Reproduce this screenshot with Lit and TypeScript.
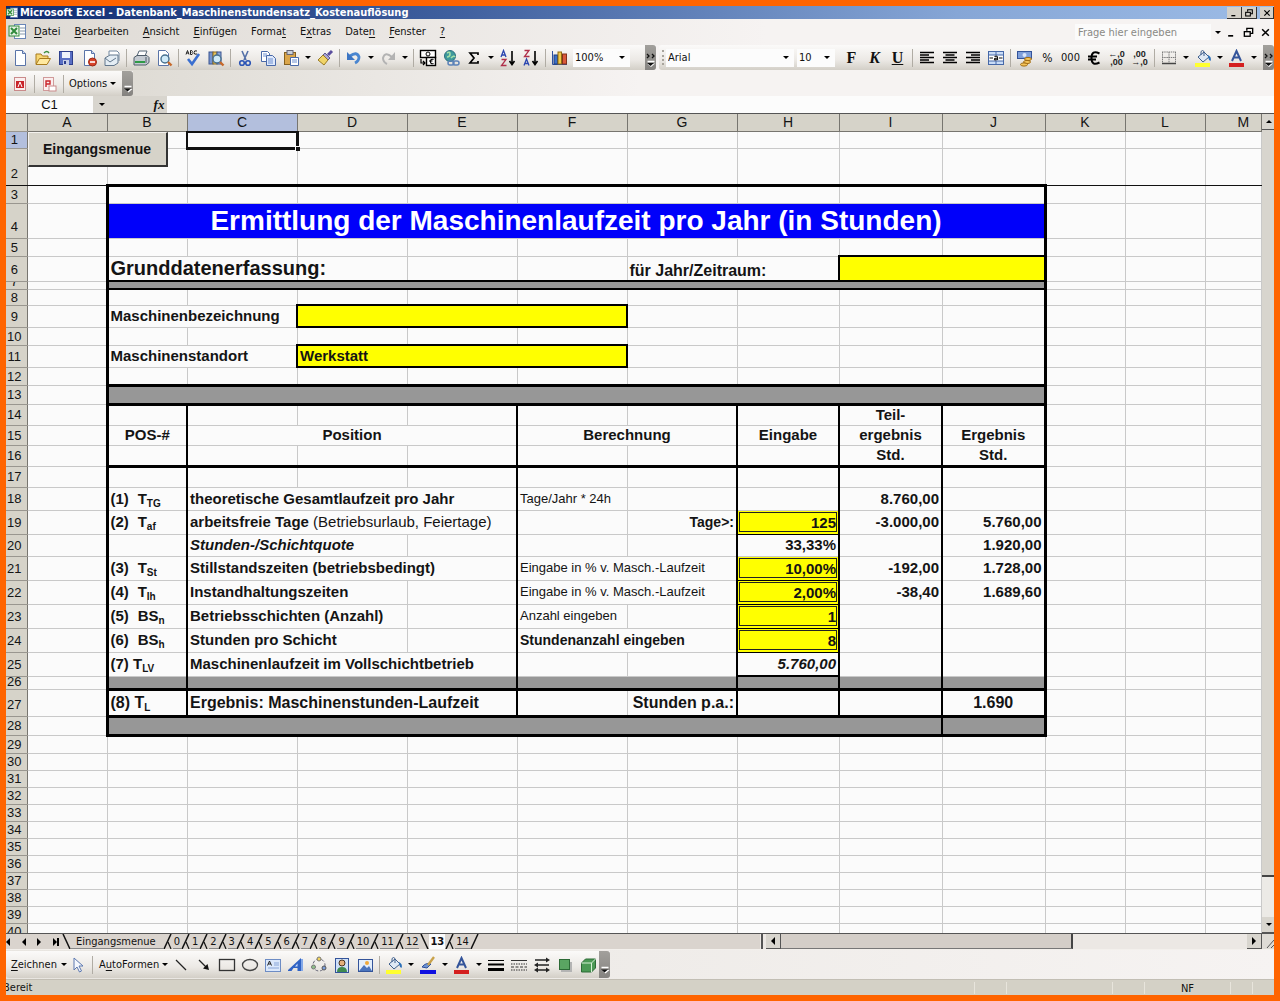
import { LitElement, html, svg, css, nothing, TemplateResult } from "lit";
import { customElement } from "lit/decorators.js";

/* ---------- icons (18 x 18 grid) ---------- */

const PAGE = svg`<path d="M4.500 1.500h7l3 3v12h-10z" fill="#fff" stroke="#5a74a8"/><path d="M11.500 1.500v3h3" fill="#c9d8f2" stroke="#5a74a8"/>`;
const PRINTER = svg`<path d="M5 7l2-5h8l-2 5" fill="#fff" stroke="#567"/><path d="M2 8.500l3-2h10l2 2v5l-3 2.500H2z" fill="#c5cbd2" stroke="#4e5c68"/><path d="M3 13h10" stroke="#2f9a46" stroke-width="2"/><path d="M14 8v6" stroke="#4e5c68"/>`;
const LENS = svg`<circle cx="10" cy="10" r="4" fill="#cfeaf8" stroke="#47708f" stroke-width="1.400"/><path d="M13 13l3.500 3.500" stroke="#c7692b" stroke-width="2.400"/>`;
const BUCKET = svg`<path d="M4 8l6-5 5 5-6 5z" fill="#dfe9f5" stroke="#3e5f8d"/><path d="M7 6V2.500q1.500-2 3 0V7" fill="none" stroke="#3e5f8d"/><path d="M14 6q4 2 2.500 6q-2-1-2.500-4z" fill="#2b6fb8"/>`;

const ICONS: Record<string, TemplateResult> = {
  new: PAGE,
  open: svg`<path d="M2 15V5h5l1.500 2H14v3" fill="#f7d774" stroke="#a87a1c"/><path d="M2 15.500l3.500-6h11l-3.500 6z" fill="#ffe9a0" stroke="#a87a1c"/><path d="M10 4q3-3 5 0" fill="none" stroke="#3f8f3f" stroke-width="1.400"/>`,
  save: svg`<rect x="2.500" y="2.500" width="13" height="13" fill="#5a6fc4" stroke="#2e3f8c"/><rect x="5" y="3" width="8" height="6" fill="#eef2fb"/><rect x="6" y="11" width="6" height="5" fill="#c8cfe6"/><rect x="7" y="12" width="2" height="3" fill="#2e3f8c"/>`,
  permission: svg`${PAGE}<circle cx="12.500" cy="13" r="4" fill="#d8432a" stroke="#9d2a16"/><path d="M10 13h5" stroke="#fff" stroke-width="1.600"/>`,
  mail: svg`<path d="M6 6V2h8l2 2v8" fill="#fff" stroke="#7388a0"/><path d="M2 9l5-3h8v8l-4 2.500H2z" fill="#e4edf4" stroke="#61768c"/><path d="M2 9l5 4 6-4" fill="none" stroke="#61768c"/>`,
  print: PRINTER,
  preview: svg`<path d="M3.500 1.500h7l3 3v12h-10z" fill="#fff" stroke="#5a74a8"/>${LENS}`,
  spell: svg`<path d="M2 5.500l1.500-4L5 5.500M2.500 4h2M6.500 1.500v4h1.500q1.500-1 0-2q1-1-.3-2zM13 2q-3-1-3 1.500T13 5" fill="none" stroke="#222"/><path d="M4 10l4 5 7-10" fill="none" stroke="#3a6fd0" stroke-width="2.600"/>`,
  research: svg`<rect x="2" y="3" width="4" height="12" fill="#7593cf" stroke="#3b5490"/><rect x="6" y="3" width="4" height="12" fill="#e5c15a" stroke="#8a6a20"/><rect x="10" y="3" width="4" height="12" fill="#8ba7da" stroke="#3b5490"/>${LENS}`,
  cut: svg`<path d="M6 2l4 9M12 2L8 11" stroke="#5470a8" stroke-width="1.600"/><circle cx="6" cy="14" r="2.300" fill="none" stroke="#2c55b5" stroke-width="1.600"/><circle cx="12" cy="14" r="2.300" fill="none" stroke="#2c55b5" stroke-width="1.600"/>`,
  copy: svg`<path d="M2.500 2.500h6l2 2v8h-8z" fill="#fff" stroke="#4969a8"/><path d="M7.500 6.500h6l3 3v7h-9z" fill="#dfe9fb" stroke="#4969a8"/><path d="M9 10h5M9 12h5M9 14h5M4 5h4M4 7h3" stroke="#6c8fd0"/>`,
  paste: svg`<rect x="2.500" y="3.500" width="11" height="12" fill="#dba64a" stroke="#85601f"/><rect x="5" y="1.500" width="6" height="4" fill="#cbd0d8" stroke="#667"/><path d="M8.500 8.500h8v8h-8z" fill="#fff" stroke="#4969a8"/><path d="M10 11h5M10 13h5" stroke="#6c8fd0"/>`,
  brush: svg`<path d="M12 6l4-4" stroke="#5b4f9e" stroke-width="3"/><path d="M9 4l5 5-2 2-5-5z" fill="#a9a4d0" stroke="#5d5990"/><path d="M7 6l5 5-4 5-6-5z" fill="#f0d468" stroke="#9a7a22"/>`,
  undo: svg`<path d="M5 7q7-5 9 1q0 4-4 6" fill="none" stroke="#4a86d0" stroke-width="2.800"/><path d="M2 3v8h8z" fill="#3d76c4"/>`,
  redo: svg`<path d="M13 8q-7-6-9 1q0 4 4 6" fill="none" stroke="#b3b3b3" stroke-width="2"/><path d="M16 3v8H9z" fill="#b3b3b3"/>`,
  euroconv: svg`<rect x="1.500" y="1.500" width="15" height="7" fill="#fff" stroke="#000" stroke-width="1.400"/><circle cx="9" cy="5" r="2" fill="none" stroke="#000"/><rect x="7.500" y="8.500" width="9" height="8" fill="#fff" stroke="#000" stroke-width="1.400"/><path d="M14.500 10.500q-3-1-3 2t3 2M10 12h3.500M2 10v4h4M4 12l2 2-2 2" fill="none" stroke="#000" stroke-width="1.200"/>`,
  link: svg`<circle cx="8" cy="7" r="5.500" fill="#3f9a9c" stroke="#2c6f80"/><path d="M5 4q3-2 3 1t-3 3M9 9q3-3 4-1" fill="none" stroke="#a5e0a8" stroke-width="1.600"/><rect x="6" y="12" width="6" height="4" rx="2" fill="none" stroke="#5b82b8" stroke-width="1.500"/><rect x="11" y="12" width="6" height="4" rx="2" fill="none" stroke="#5b82b8" stroke-width="1.500"/>`,
  sum: svg`<path d="M13 6V4H5l4 5-4 5h8v-2" fill="none" stroke="#000" stroke-width="1.700"/>`,
  az: svg`<path d="M2 8l2.500-6.500L7 8M3 6h3" fill="none" stroke="#2a46b0" stroke-width="1.300"/><path d="M2.500 10.500h4.500l-4.500 6h5" fill="none" stroke="#b0304a" stroke-width="1.300"/><path d="M13 2v13M10.500 12L13 15.500l2.500-3.500" fill="none" stroke="#000" stroke-width="1.600"/>`,
  za: svg`<path d="M2.500 1.500h4.500l-4.500 6h5" fill="none" stroke="#b0304a" stroke-width="1.300"/><path d="M2 16.500l2.500-6.500L7 16.500M3 14.500h3" fill="none" stroke="#2a46b0" stroke-width="1.300"/><path d="M13 2v13M10.500 12L13 15.500l2.500-3.500" fill="none" stroke="#000" stroke-width="1.600"/>`,
  chart: svg`<path d="M1.500 2v13.500H16" fill="none" stroke="#2c4f9e"/><rect x="3" y="6" width="3.500" height="9" fill="#3d70c9" stroke="#1f3f80"/><rect x="7" y="3" width="3.500" height="12" fill="#f2c84a" stroke="#8f6c12"/><rect x="11.500" y="5" width="4" height="10" fill="#d9583a" stroke="#84301a"/>`,
  left: svg`<path d="M2 3.500h14M2 6h9M2 8.500h14M2 11h9M2 13.500h14" stroke="#000" stroke-width="1.300"/>`,
  center: svg`<path d="M2 3.500h14M4.500 6h9M2 8.500h14M4.500 11h9M2 13.500h14" stroke="#000" stroke-width="1.300"/>`,
  right: svg`<path d="M2 3.500h14M7 6h9M2 8.500h14M7 11h9M2 13.500h14" stroke="#000" stroke-width="1.300"/>`,
  merge: svg`<rect x="1.500" y="2.500" width="15" height="13" fill="#c9dcf7" stroke="#4668a8"/><rect x="2" y="6" width="14" height="6" fill="#fff"/><path d="M9 3v3M9 12v3M1.500 6h15M1.500 12h15" stroke="#4668a8"/><path d="M2.500 9h3.500M12 9h3.500M7.500 7.500q3-1 3 1v2.500M10.500 9q-3 0-3 1.200t3 .3" fill="none" stroke="#111" stroke-width="1.200"/>`,
  currency: svg`<rect x="1.500" y="2.500" width="14" height="7" fill="#7f9fda" stroke="#34549a"/><circle cx="8.500" cy="6" r="2" fill="#dbe6fa"/><ellipse cx="12" cy="10" rx="3.500" ry="1.600" fill="#f4c35a" stroke="#a06c14"/><ellipse cx="11" cy="13" rx="3.500" ry="1.600" fill="#f4c35a" stroke="#a06c14"/><ellipse cx="8" cy="15.500" rx="3.500" ry="1.600" fill="#f4c35a" stroke="#a06c14"/>`,
  euro: svg`<path d="M14.500 4.500q-8-4-8 4.500t8 4.500M3 7.500h9M3 10.500h8" fill="none" stroke="#000" stroke-width="2"/>`,
  borders: svg`<path d="M2.500 3v11M9 3v11M15.500 3v11M2 3h14M2 8.500h14" stroke="#7c7c7c" stroke-dasharray="1.500 .7"/><path d="M2 14.500h14" stroke="#444" stroke-width="1.500"/>`,
  fill: svg`${BUCKET}<rect x="1" y="14" width="15" height="4" fill="#ffff30"/>`,
  font: svg`<path d="M4 12l4.500-10L13 12M5.800 8.500h5.400" fill="none" stroke="#34549a" stroke-width="2"/><rect x="1" y="14" width="15" height="4" fill="#d41f1f"/>`,
  pen: svg`<path d="M3 11q4-5 9-3l-4 4z" fill="#6f93d0" stroke="#2c4f9e"/><path d="M9 9l6-8" stroke="#c9a24a" stroke-width="2.400"/><rect x="1" y="14" width="16" height="4" fill="#1010e0"/>`,
  pdf: svg`<rect x="3.500" y="2.500" width="11" height="13" fill="#fbeeee" stroke="#c98a8a"/><rect x="5" y="6" width="8" height="7" fill="#c9252b"/><path d="M7 12l2-5 2 5" fill="none" stroke="#fff"/>`,
  pdfmail: svg`<rect x="3.500" y="2.500" width="10" height="13" fill="#fbeeee" stroke="#d09a9a"/><path d="M6 12V6h4v3H6" fill="none" stroke="#c9252b" stroke-width="1.400"/><rect x="9" y="11" width="7" height="5" fill="#fff" stroke="#c98a8a"/>`,
  pointer: svg`<path d="M5 2v12l3-3 2.500 5 2-1L10 10h4z" fill="#f4f7fd" stroke="#5c78b0"/>`,
  line: svg`<path d="M4 4l10 10" stroke="#222" stroke-width="1.300"/>`,
  arrow: svg`<path d="M4 4l8 8" stroke="#222" stroke-width="1.300"/><path d="M14 14l-1.500-6L8 12.500z" fill="#111"/>`,
  rect: svg`<rect x="1.500" y="3.500" width="15" height="11" fill="none" stroke="#333" stroke-width="1.300"/>`,
  oval: svg`<ellipse cx="9" cy="9" rx="7.500" ry="5.500" fill="none" stroke="#444" stroke-width="1.300"/>`,
  textbox: svg`<rect x="1.500" y="3.500" width="15" height="12" fill="#dbe8fb" stroke="#6d8cc4"/><path d="M3.500 9.500L5.500 5l2 4.500M4.300 8h2.400" fill="none" stroke="#222"/><path d="M10 7h5M10 9h5M4 12h11" stroke="#89a6d8"/>`,
  wordart: svg`<path d="M1 14L14 2v13h-3.500v-3H6.500L4.500 15H1z" fill="#2f62c4"/><path d="M8 10.500h2.500V7.500z" fill="#cfe0fa"/><path d="M15 3v12" stroke="#84a8e8" stroke-width="2"/>`,
  diagram: svg`<circle cx="9" cy="9" r="6" fill="none" stroke="#667" stroke-dasharray="3 2"/><circle cx="9" cy="3" r="2" fill="#f3d45a" stroke="#777"/><circle cx="3.500" cy="11" r="2" fill="#8fc08a" stroke="#777"/><circle cx="14" cy="12" r="2" fill="#7ea0dd" stroke="#555"/>`,
  clipart: svg`<rect x="2.500" y="2.500" width="13" height="14" fill="#cfe0f8" stroke="#34549a"/><circle cx="9" cy="7" r="3" fill="#e6b07c" stroke="#4a3320"/><path d="M4 16q0-5 5-5t5 5z" fill="#3f8a50"/>`,
  picture: svg`<rect x="2.500" y="3.500" width="14" height="12" fill="#e3eefb" stroke="#34549a"/><circle cx="11" cy="7" r="2" fill="#f0a93c"/><path d="M3 15l5-6 3 3 2-2 3 5z" fill="#4a74bd"/>`,
  weights: svg`<path d="M1 4.500h16" stroke="#000"/><path d="M1 8.500h16" stroke="#000" stroke-width="2"/><path d="M1 13.500h16" stroke="#000" stroke-width="3"/>`,
  dashes: svg`<path d="M1 4.500h16" stroke="#333"/><path d="M1 8h16M1 14h16" stroke="#333" stroke-dasharray="1.500 1"/><path d="M1 11h16" stroke="#333" stroke-dasharray="3 1.500"/>`,
  arrows: svg`<path d="M2 4h13M3 9h13M3 14h12" stroke="#222" stroke-width="1.300"/><path d="M17 4l-4-2.500v5zM1 9l4-2.500v5zM1 14l4-2.500v5zM17 14l-4-2.500v5z" fill="#222"/>`,
  shadow: svg`<rect x="5" y="6" width="11" height="10" fill="#b4b4b4"/><rect x="3.500" y="3.500" width="10" height="10" fill="#5aa562" stroke="#2c6a36"/>`,
  cube: svg`<path d="M2.500 7l4-4h10v9l-4 4h-10z" fill="#4b9a55" stroke="#2c6a36"/><path d="M2.500 7h10v9M12.500 7l4-4" fill="none" stroke="#d5f0d5"/>`,
  excel: svg`<rect x="6.500" y="1.500" width="11" height="14" fill="#fff" stroke="#6a86b8"/><path d="M12 5h5M12 8h5M12 11h5" stroke="#89a"/><rect x="1" y="3" width="10" height="10" fill="#e6f2e4" stroke="#2f8a3c"/><path d="M3 5l6 6M9 5l-6 6" stroke="#2f8a3c" stroke-width="2"/>`,
  min: svg`<path d="M5 13h6" stroke="#000" stroke-width="2"/>`,
  restore: svg`<path d="M7 7V4h7v6h-3" fill="none" stroke="#000" stroke-width="1.600"/><rect x="4" y="8" width="7" height="5.500" fill="none" stroke="#000" stroke-width="1.600"/>`,
  close: svg`<path d="M5 5l8 8M13 5l-8 8" stroke="#000" stroke-width="1.800"/>`,
  expand: svg`<path d="M5 5l2 2-2 2M10 5l2 2-2 2" stroke="#111" stroke-width="1.300"/><path d="M5.500 12.500h7" stroke="#fff" stroke-width="1.400"/><path d="M5 14.500h8l-4 3.500z" fill="#fff"/><path d="M5 14h7l-3.500 3z" fill="#111"/>`,
  more: svg`<path d="M5.500 11.500h7" stroke="#fff" stroke-width="1.400"/><path d="M5.500 14h8l-4 3.500z" fill="#fff"/><path d="M5 13.500h7l-3.500 3z" fill="#111"/>`,
};

const icon = (name: string) =>
  html`<svg class="ic" viewBox="0 0 18 18" aria-hidden="true">${ICONS[name]}</svg>`;
const tri = (dir = "down") => html`<i class="tri ${dir}"></i>`;
const btn = (name: string, label: string) =>
  html`<button class="tb" title=${label} aria-label=${label}>${icon(name)}</button>`;
const glyph = (cls: string, text: string) =>
  html`<button class="tb ${cls}">${text}</button>`;
const drop = (label: string) =>
  html`<button class="dd" aria-label=${label}>${tri()}</button>`;
const sep = html`<span class="sep"></span>`;
const end = (name: string) =>
  html`<button class="end" aria-label="Symbolleistenoptionen">${icon(name)}</button>`;

/* ---------- sheet data ---------- */

type Cell = { span: number; cls: string; body: unknown };
type Row = { n: number; h: number; cls?: string; cells?: Cell[] };

const c = (span: number, cls = "", body: unknown = nothing): Cell => ({ span, cls, body });
const field = (label: string, value = "") =>
  html`<input aria-label=${label} .value=${value} />`;
const pos = (no: string, sym: string, sub: string) =>
  html`<span class="pos">(${no})</span> ${sym}<sub>${sub}</sub>`;
const blank = (n: number) => Array.from({ length: n }, () => c(1));
const V = "vr";

const bodyRow = (
  n: number, h: number, position: Cell[], left: unknown, calc: Cell[],
  entry: Cell, part = "", result = "",
): Row => ({
  n, h, cls: "form",
  cells: [c(1, V, left), ...position, ...calc, entry, c(1, "vr num", part), c(1, "num", result)],
});

const ROWS: Row[] = [
  { n: 1, h: 17 },
  { n: 2, h: 37, cls: "freeze" },
  { n: 3, h: 18, cls: "form top", cells: blank(9) },
  { n: 4, h: 35, cls: "form", cells: [c(9, "title", "Ermittlung der Maschinenlaufzeit pro Jahr (in Stunden)")] },
  { n: 5, h: 18, cls: "form", cells: blank(9) },
  { n: 6, h: 25, cls: "form", cells: [
    c(2, "big", "Grunddatenerfassung:"), c(1), c(1), c(1),
    c(2, "mid", "für Jahr/Zeitraum:"), c(2, "entry", field("Jahr/Zeitraum"))] },
  { n: 7, h: 8, cls: "form thin", cells: [c(9, "grey")] },
  { n: 8, h: 16, cls: "form", cells: blank(9) },
  { n: 9, h: 22, cls: "form", cells: [
    c(2, "", "Maschinenbezeichnung"), c(3, "entry", field("Maschinenbezeichnung")), ...blank(4)] },
  { n: 10, h: 18, cls: "form", cells: blank(9) },
  { n: 11, h: 22, cls: "form", cells: [
    c(2, "", "Maschinenstandort"), c(3, "entry", field("Maschinenstandort", "Werkstatt")), ...blank(4)] },
  { n: 12, h: 18, cls: "form", cells: blank(9) },
  { n: 13, h: 19, cls: "form band", cells: [c(9, "grey")] },
  { n: 14, h: 21, cls: "form mid-row", cells: [c(1, V), c(1), c(1), c(1, V), c(1), c(1, V), c(1, V), c(1, V, "Teil-"), c(1)] },
  { n: 15, h: 20, cls: "form mid-row", cells: [
    c(1, V, "POS-#"), c(3, V, "Position"), c(2, V, "Berechnung"), c(1, V, "Eingabe"),
    c(1, V, "ergebnis"), c(1, "", "Ergebnis")] },
  { n: 16, h: 21, cls: "form mid-row under", cells: [
    c(1, V), c(1), c(1), c(1, V), c(1), c(1, V), c(1, V), c(1, V, "Std."), c(1, "", "Std.")] },
  { n: 17, h: 21, cls: "form", cells: [c(1, V), c(1), c(1), c(1, V), c(1), c(1, V), c(1, V), c(1, V), c(1)] },
  bodyRow(18, 23, [c(3, V, "theoretische Gesamtlaufzeit pro Jahr")], pos("1", "T", "TG"),
    [c(1, "note", "Tage/Jahr * 24h"), c(1, V)], c(1, V), "8.760,00"),
  bodyRow(19, 24, [c(3, V, html`arbeitsfreie Tage <span class="plain">(Betriebsurlaub, Feiertage)</span>`)], pos("2", "T", "af"),
    [c(1), c(1, "vr num small", "Tage>:")], c(1, "ent2", field("Arbeitsfreie Tage", "125")), "-3.000,00", "5.760,00"),
  bodyRow(20, 22, [c(2, "ital", "Stunden-/Schichtquote"), c(1, V)], nothing,
    [c(1), c(1, V)], c(1, "vr num", "33,33%"), "", "1.920,00"),
  bodyRow(21, 24, [c(3, V, "Stillstandszeiten (betriebsbedingt)")], pos("3", "T", "St"),
    [c(2, "vr note", "Eingabe in % v. Masch.-Laufzeit")], c(1, "ent2", field("Stillstandszeiten", "10,00%")), "-192,00", "1.728,00"),
  bodyRow(22, 24, [c(2, "", "Instandhaltungszeiten"), c(1, V)], pos("4", "T", "Ih"),
    [c(2, "vr note", "Eingabe in % v. Masch.-Laufzeit")], c(1, "ent2", field("Instandhaltungszeiten", "2,00%")), "-38,40", "1.689,60"),
  bodyRow(23, 24, [c(2, "", "Betriebsschichten (Anzahl)"), c(1, V)], pos("5", "BS", "n"),
    [c(1, "note", "Anzahl eingeben"), c(1, V)], c(1, "ent2", field("Betriebsschichten", "1"))),
  bodyRow(24, 24, [c(2, "", "Stunden pro Schicht"), c(1, V)], pos("6", "BS", "h"),
    [c(2, "vr small", "Stundenanzahl eingeben")], c(1, "ent2", field("Stunden pro Schicht", "8"))),
  bodyRow(25, 24, [c(3, V, "Maschinenlaufzeit im Vollschichtbetrieb")], html`(7) T<sub>LV</sub>`,
    [c(1), c(1, V)], c(1, "vr num ital hb", "5.760,00")),
  { n: 26, h: 13, cls: "form under", cells: [
    c(1, "vr grey"), c(3, "vr grey"), c(2, "vr grey"), c(1, "vr grey ht"), c(1, "vr grey"), c(1, "grey")] },
  { n: 27, h: 27, cls: "form under mid-size", cells: [
    c(1, V, html`(8) T<sub>L</sub>`), c(3, V, "Ergebnis: Maschinenstunden-Laufzeit"),
    c(1), c(1, "vr num", "Stunden p.a.:"), c(1, V), c(1, V), c(1, "ctr", "1.690")] },
  { n: 28, h: 19, cls: "form under", cells: [c(8, "vr grey"), c(1, "grey")] },
  { n: 29, h: 18 },
  ...Array.from({ length: 11 }, (_, i) => ({ n: 30 + i, h: 17 })),
];

const COLS = ["A", "B", "C", "D", "E", "F", "G", "H", "I", "J", "K", "L", "M"];
const TABS = ["0", "1", "2", "3", "4", "5", "6", "7", "8", "9", "10", "11", "12", "13", "14"];

const MENU: [string, string, string][] = [
  ["", "D", "atei"], ["", "B", "earbeiten"], ["", "A", "nsicht"], ["", "E", "infügen"],
  ["Forma", "t", ""], ["E", "x", "tras"], ["Date", "n", ""], ["", "F", "enster"], ["", "?", ""],
];

@customElement("app-root")
export class AppRoot extends LitElement {
  static styles = css`
    :host { display: block; }
    * { box-sizing: border-box; }
    button, input, select { font: inherit; color: inherit; margin: 0; padding: 0; border: 0; border-radius: 0; background: none; }
    select { appearance: none; }
    .win {
      height: 100vh; min-height: 400px; border: 6px solid #ff6400; overflow: hidden;
      display: flex; flex-direction: column; background: #f5f2f0; color: #111;
      font: 11px/14px "DejaVu Sans Condensed", "Open Sans", "DejaVu Sans", sans-serif;
    }
    .ic { width: 18px; height: 18px; display: block; flex: none; fill: none; }
    .tri { display: block; width: 0; height: 0; border: 3px solid transparent; flex: none; }
    .tri.down { border-top-color: #000; border-bottom: 0; }
    .tri.up { border-bottom-color: #000; border-top: 0; }
    .tri.left { border: 4px solid transparent; border-right-color: #000; border-left: 0; }
    .tri.right { border: 4px solid transparent; border-left-color: #000; border-right: 0; }

    .title-bar {
      flex: none; height: 13px; display: flex; align-items: center; overflow: hidden;
      background: linear-gradient(90deg, #0e2a70, #3f5f9e 35%, #86a6d6 75%, #9dbce6);
      color: #fff; font-weight: bold;
    }
    .title-bar .ic { width: 12px; height: 12px; }
    .title-bar h1 { flex: 1; margin: 0 0 0 2px; font-size: 11px; line-height: 13px; white-space: nowrap; }
    .title-bar button { width: 15px; height: 12px; background: #d4d0c8; border-right: 1px solid #333; border-bottom: 1px solid #333; overflow: hidden; }
    .title-bar button .ic { width: 14px; }
    .title-bar button:last-child { margin-left: 3px; width: 14px; }

    .menu { flex: none; height: 26px; display: flex; align-items: center; background: linear-gradient(90deg, #dedad4, #f6f3f2 60%); padding-left: 2px; overflow: hidden; }
    .menu nav { display: flex; flex: 1; gap: 14px; padding-left: 8px; }
    .menu input { width: 136px; height: 16px; background: #fbfbfb; padding-left: 3px; }
    .menu input::placeholder { color: #8a8a86; opacity: 1; }
    .menu .dd { margin-left: 1px; }
    .menu .wc { width: 17px; }
    .menu .wc .ic { width: 15px; height: 15px; }
    u { text-underline-offset: 2px; }

    .bars { flex: none; background: linear-gradient(90deg, #d9d6ce, #f6f3f2 50%); overflow: hidden; }
    .bar-row { display: flex; height: 25px; align-items: stretch; }
    .bar { display: flex; align-items: center; background: linear-gradient(#fbfaf9, #ece9e5 60%, #d3cfc7); border-radius: 0 0 3px 3px; flex: none; padding-left: 2px; }
    .bar.fmt { flex: 1; margin-left: 3px; border-radius: 3px 0 0 3px; padding-left: 0; min-width: 0; }
    .tb { width: 23px; height: 22px; display: flex; align-items: center; justify-content: center; flex: none; }
    .dd { width: 11px; height: 22px; display: flex; align-items: center; justify-content: center; flex: none; }
    .sep { width: 6px; height: 18px; flex: none; display: flex; justify-content: center; }
    .sep::before { content: ""; width: 1px; background: #b0aca4; }
    .end { width: 11px; align-self: stretch; background: linear-gradient(#a2a09c, #858380); display: flex; align-items: center; justify-content: center; border-radius: 0 3px 3px 0; flex: none; overflow: hidden; }
    .combo { display: flex; align-items: center; background: #fcfcfc; height: 18px; flex: none; }
    .combo select { flex: 1; min-width: 0; height: 18px; padding-left: 2px; }
    .combo .tri { margin: 0 5px; }
    .zoom { width: 57px; margin: 0 15px 0 2px; }
    .face { width: 128px; }
    .size { width: 38px; margin: 0 5px 0 3px; }
    .grip { width: 1px; height: 15px; border-left: 2px dotted #a8a49c; margin: 0 2px 0 3px; }
    .serif { font: bold 16px/20px "Liberation Serif", serif; }
    .k { font-style: italic; }
    .uu { text-decoration: underline; }
    .wide { font-size: 12px; }
    .tiny { font: bold 9px/8px "Liberation Sans", sans-serif; white-space: pre; text-align: center; color: #222; }
    .second { height: 26px; }
    .second .bar { margin: 1px 0 0; }
    .opt { display: flex; align-items: center; gap: 3px; height: 22px; padding: 0 6px 0 3px; }

    .formula { flex: none; height: 18px; display: flex; background: #d8d5ce; border-bottom: 1px solid #555; font: 13px/16px "Liberation Sans", sans-serif; }
    .name-box { width: 87px; background: #fcfcfc; text-align: center; }
    .formula .dd { width: 17px; height: 17px; }
    .fx { margin-left: auto; font: italic bold 13px/16px "Liberation Serif", serif; width: 16px; text-align: center; }
    .fx-area { width: 57px; display: flex; }
    .formula .edit { flex: 1; min-width: 0; background: #fcfcfc; }

    .work { flex: 1; min-height: 0; display: flex; background: #fbfbfb; }
    .sheet { flex: 1; min-width: 0; overflow: hidden; }
    table { border-collapse: collapse; table-layout: fixed; width: 100%; font: bold 15px/18px "Liberation Sans", sans-serif; color: #141414; }
    .w-rh { width: 21px; } .w-80 { width: 80px; } .w-110 { width: 110px; } .w-102 { width: 102px; } .w-103 { width: 103px; }
    th, td { padding: 0 2px; border: 1px solid #c9c9c9; white-space: nowrap; text-align: left; overflow: visible; }
    thead th { background: #d6d3c9; border-color: #77756f; border-top: 0; height: 17px; font: 14px/16px "Liberation Sans", sans-serif; text-align: center; overflow: hidden; }
    thead th:last-child { padding-left: 22px; }
    .rh { background: #d6d3c9; border-color: #99968f; border-right-color: #77756f; border-left: 0; padding: 0; font: 13px/15px "Liberation Sans", sans-serif; vertical-align: bottom; }
    .rh div { overflow: hidden; display: flex; align-items: flex-end; justify-content: center; padding-right: 4px; }
    thead .on, .rh.on { background: #b3bfdd; }
    .anchor { position: relative; }
    .sheet-btn {
      position: absolute; left: 0; top: 0; width: 140px; height: 35px; z-index: 1; background: #d6d3c9;
      border: 1px solid #f4f2ee; border-right: 2px solid #333; border-bottom: 2px solid #333;
      font: bold 14px/18px "Liberation Sans", sans-serif;
    }
    .sel { position: absolute; left: -2px; top: -1px; right: -2px; bottom: -2px; border: 3px solid #111; border-top-width: 2px; border-left-width: 2px; }
    .sel::after { content: ""; position: absolute; right: -4px; bottom: -4px; width: 4px; height: 4px; background: #111; border: 1px solid #fbfbfb; box-sizing: content-box; border-right: 0; border-bottom: 0; }
    .freeze td, .freeze th { border-bottom-color: #111; }
    .form .in { border-bottom-color: #c9c9c9; }
    .top .in { border-top: 3px solid #000; }
    .vr { border-right: 2px solid #000; }
    .under .in { border-bottom: 3px solid #000; }
    .band .in { border-top: 3px solid #000; border-bottom: 3px solid #000; }
    .thin .in { border-top: 2px solid #000; border-bottom: 2px solid #000; }
    .grey { background: #979797; }
    .title { background: #0000fa; color: #fff; font-size: 28px; line-height: 32px; text-align: center; }
    .big { font-size: 20px; line-height: 22px; }
    .mid, .mid-size { font-size: 16px; }
    .mid { vertical-align: bottom; }
    .mid-row .in, .ctr { text-align: center; }
    .num { text-align: right; }
    .note { font-size: 13px; font-weight: normal; }
    .small { font-size: 14px; }
    .plain { font-weight: normal; }
    .ital { font-style: italic; }
    .form .hb.in { border-bottom: 2px solid #000; }
    .ht { border-top: 2px solid #000; }
    .pos { display: inline-block; width: 23px; }
    sub { font-size: 10px; line-height: 0; vertical-align: -3px; }
    .entry { background: #ffff00; border: 2px solid #000; }
    .form .entry.in { border-bottom-color: #000; }
    td input { display: block; width: 100%; height: 18px; font-weight: bold; }
    .ent2 { background: #ffff00; padding: 1px; border: 1px solid #000; border-left: 2px solid #000; border-right: 2px solid #000; }
    .form .ent2.in { border-bottom-color: #000; }
    .ent2 input { height: 20px; border: 1px solid #222; text-align: right; }
    .fl { border-left: 3px solid #000; }
    .fr { border-right: 3px solid #000; }

    .vs { width: 12px; flex: none; display: flex; flex-direction: column; background: #eceae6; overflow: hidden; }
    .arrow-btn { background: #d8d5ce; width: 15px; height: 15px; flex: none; display: flex; align-items: center; justify-content: center; border-right: 1px solid #555; border-bottom: 1px solid #555; }
    .vs .arrow-btn { height: 16px; }
    .vs .thumb { flex: 1; background: #d8d5ce; border-bottom: 2px solid #444; }
    .vs .room { height: 40px; }

    .tabs-row { flex: none; height: 16px; display: flex; background: #dad4ce; border-top: 1px solid #555; }
    .navs { display: flex; width: 55px; flex: none; align-items: center; justify-content: space-between; padding-right: 2px; }
    .navs button { display: flex; align-items: center; height: 14px; }
    .navs .bar1 { width: 2px; height: 8px; background: #000; }
    .tabs { display: flex; flex: 1; min-width: 0; overflow: hidden; }
    .tab { height: 15px; display: flex; align-items: center; border-bottom: 1px solid #888; padding: 0 1px; white-space: nowrap; line-height: 13px; }
    .tab.first { padding: 0 7px 0 5px; }
    .tab.act { background: #fbfbfb; font-weight: bold; border-bottom: 0; }
    .slash { width: 10px; height: 15px; display: block; flex: none; }
    .hs { display: flex; width: 502px; flex: none; background: #ece8e4; }
    .split { width: 3px; border-right: 2px solid #555; background: #ece8e4; margin-right: 3px; }
    .hs .thumb { flex: 5; background: #d4cec8; border-right: 2px solid #444; border-bottom: 1px solid #777; }
    .hs .room { flex: 3; }
    .corner { width: 12px; background: #dedbd5; flex: none; overflow: hidden; }
    .draw { flex: none; height: 30px; display: flex; padding: 1px 0; background: linear-gradient(90deg, #e8e5e0, #f6f3f2); border-top: 1px solid #f3f0ec; }
    .draw .bar { padding-left: 5px; }
    .txt { display: flex; align-items: center; gap: 4px; height: 22px; white-space: nowrap; }
    .auto { padding: 0 1px 0 3px; gap: 3px; }
    .status { flex: none; height: 16px; display: flex; align-items: center; background: #d4d1c6; overflow: hidden; border-top: 1px solid #c2beb4; }
    .status .msg { flex: 1; text-indent: -3px; }
    .status .nf { flex: none; width: 86px; height: 12px; line-height: 13px; text-align: center; border-left: 1px solid #e8e5dc; }
    .status .box { flex: none; width: 32px; height: 12px; border-left: 1px solid #e8e5dc; }
    .status .box.far { width: 106px; }
    .status .box.small-box { width: 22px; }
  `;

  private slash(kind: "both" | "fwd" | "back" = "fwd") {
    return html`<svg class="slash" viewBox="0 0 10 15" aria-hidden="true">
      ${kind !== "back" ? svg`<path d="M1 15L8 0" stroke="#111" stroke-width="1.500"/>` : nothing}
      ${kind === "both" ? svg`<path d="M5 8l3 7" stroke="#111" stroke-width="1.200"/>` : nothing}
      ${kind === "back" ? svg`<path d="M2 0l7 15" stroke="#111" stroke-width="1.500"/>` : nothing}
    </svg>`;
  }

  private row(r: Row) {
    const cells = r.cells ?? [];
    const plain = (n: number) => Array.from({ length: n }, () => html`<td></td>`);
    const lift = Math.max(0, Math.min(4, Math.floor((r.h - 15) / 2)));
    return html`<tr class=${r.cls ?? ""} style="height:${r.h}px">
      <th class="rh ${r.n === 1 ? "on" : ""}" scope="row"><div style="height:${r.h - 1}px;padding-bottom:${lift}px">${r.n}</div></th>
      ${r.n === 1
        ? html`<td class="anchor"><button class="sheet-btn">Eingangsmenue</button></td><td></td>
            <td class="anchor"><div class="sel"></div></td>${plain(10)}`
        : cells.length
          ? html`<td></td>${cells.map((x, i) => html`<td colspan=${x.span}
              class="in ${x.cls} ${i === 0 ? "fl" : ""} ${i === cells.length - 1 ? "fr" : ""}">${x.body}</td>`)}${plain(3)}`
          : plain(13)}
    </tr>`;
  }

  render() {
    return html`<div class="win">
      <header class="title-bar">
        ${icon("excel")}
        <h1>Microsoft Excel - Datenbank_Maschinenstundensatz_Kostenauflösung</h1>
        <button aria-label="Minimieren">${icon("min")}</button>
        <button aria-label="Wiederherstellen">${icon("restore")}</button>
        <button aria-label="Schließen">${icon("close")}</button>
      </header>

      <div class="menu">
        ${icon("excel")}
        <nav>${MENU.map(([a, k, b]) => html`<button>${a}<u>${k}</u>${b}</button>`)}</nav>
        <input aria-label="Frage" placeholder="Frage hier eingeben" />
        ${drop("Fragen")}
        <button class="tb wc" aria-label="Mappe minimieren">${icon("min")}</button>
        <button class="tb wc" aria-label="Mappe wiederherstellen">${icon("restore")}</button>
        <button class="tb wc" aria-label="Mappe schließen">${icon("close")}</button>
      </div>

      <div class="bars">
        <div class="bar-row">
          <div class="bar">
            ${btn("new", "Neu")}${btn("open", "Öffnen")}${btn("save", "Speichern")}${btn("permission", "Berechtigung")}${btn("mail", "E-Mail")}
            ${sep}${btn("print", "Drucken")}${btn("preview", "Seitenansicht")}
            ${sep}${btn("spell", "Rechtschreibung")}${btn("research", "Recherchieren")}
            ${sep}${btn("cut", "Ausschneiden")}${btn("copy", "Kopieren")}${btn("paste", "Einfügen")}${drop("Einfügeoptionen")}${btn("brush", "Format übertragen")}
            ${sep}${btn("undo", "Rückgängig")}${drop("Rückgängig-Liste")}${btn("redo", "Wiederholen")}${drop("Wiederholen-Liste")}
            ${sep}${btn("euroconv", "Eurowährung")}${btn("link", "Hyperlink")}${btn("sum", "AutoSumme")}${drop("Funktionen")}${btn("az", "Aufsteigend")}${btn("za", "Absteigend")}
            ${sep}${btn("chart", "Diagramm")}
            <label class="combo zoom"><select aria-label="Zoom"><option>100%</option></select>${tri()}</label>
            ${end("expand")}
          </div>
          <div class="bar fmt">
            <span class="grip"></span>
            <label class="combo face"><select aria-label="Schriftart"><option>Arial</option></select>${tri()}</label>
            <label class="combo size"><select aria-label="Schriftgrad"><option>10</option></select>${tri()}</label>
            ${glyph("serif", "F")}${glyph("serif k", "K")}${glyph("serif uu", "U")}
            ${sep}${btn("left", "Linksbündig")}${btn("center", "Zentriert")}${btn("right", "Rechtsbündig")}${btn("merge", "Zusammenführen")}
            ${sep}${btn("currency", "Währung")}${glyph("wide", "%")}${glyph("", "000")}${btn("euro", "Euro")}${glyph("tiny", "←,0\n,00")}${glyph("tiny", ",00\n→,0")}
            ${sep}${btn("borders", "Rahmen")}${drop("Rahmenarten")}${btn("fill", "Füllfarbe")}${drop("Füllfarben")}${btn("font", "Schriftfarbe")}${drop("Schriftfarben")}
            <span style="flex:1"></span>${end("expand")}
          </div>
        </div>
        <div class="bar-row second">
          <div class="bar">
            ${btn("pdf", "In PDF konvertieren")}${sep}${btn("pdfmail", "PDF senden")}${sep}
            <button class="opt">Options ${tri()}</button>
            ${end("more")}
          </div>
        </div>
      </div>

      <div class="formula">
        <input class="name-box" aria-label="Namenfeld" .value=${"C1"} />
        ${drop("Namen")}
        <div class="fx-area"><button class="fx">fx</button></div>
        <input class="edit" aria-label="Bearbeitungsleiste" />
      </div>

      <main class="work">
        <div class="sheet">
          <table>
            <colgroup>
              <col class="w-rh" /><col class="w-80" /><col class="w-80" />
              <col class="w-110" /><col class="w-110" /><col class="w-110" /><col class="w-110" /><col class="w-110" />
              <col class="w-102" /><col class="w-103" /><col class="w-103" /><col class="w-80" /><col class="w-80" /><col />
            </colgroup>
            <thead><tr><th class="rh"></th>${COLS.map((n) => html`<th scope="col" class=${n === "C" ? "on" : ""}>${n}</th>`)}</tr></thead>
            <tbody>${ROWS.map((r) => this.row(r))}</tbody>
          </table>
        </div>
        <div class="vs">
          <button class="arrow-btn" aria-label="Nach oben">${tri("up")}</button>
          <div class="thumb"></div><div class="room"></div>
          <button class="arrow-btn" aria-label="Nach unten">${tri()}</button>
        </div>
      </main>

      <div class="tabs-row">
        <div class="navs">
          <button aria-label="Erstes Blatt">${tri("left")}</button>
          <button aria-label="Vorheriges Blatt">${tri("left")}</button>
          <button aria-label="Nächstes Blatt">${tri("right")}</button>
          <button aria-label="Letztes Blatt">${tri("right")}<i class="bar1"></i></button>
        </div>
        <div class="tabs">
          ${this.slash("back")}<button class="tab first">Eingangsmenue</button>
          ${TABS.map((t) => html`${this.slash(t === "13" ? "back" : "both")}<button class="tab ${t === "13" ? "act" : ""}">${t}</button>`)}
          ${this.slash()}
        </div>
        <div class="hs">
          <span class="split"></span>
          <button class="arrow-btn" aria-label="Nach links">${tri("left")}</button>
          <div class="thumb"></div><div class="room"></div>
          <button class="arrow-btn" aria-label="Nach rechts">${tri("right")}</button>
        </div>
        <svg class="corner" viewBox="0 0 12 15" aria-hidden="true"><path d="M5 14l7-8M9 14l3-3" stroke="#555" /></svg>
      </div>

      <div class="draw">
        <div class="bar">
          <button class="txt"><span><u>Z</u>eichnen</span>${tri()}</button>
          ${btn("pointer", "Objekte markieren")}${sep}
          <button class="txt auto"><span>A<u>u</u>toFormen</span>${tri()}</button>
          ${btn("line", "Linie")}${btn("arrow", "Pfeil")}${btn("rect", "Rechteck")}${btn("oval", "Ellipse")}${btn("textbox", "Textfeld")}${btn("wordart", "WordArt")}${btn("diagram", "Schematische Darstellung")}${btn("clipart", "ClipArt")}${btn("picture", "Grafik")}
          ${sep}${btn("fill", "Füllfarbe")}${drop("Füllfarben")}${btn("pen", "Linienfarbe")}${drop("Linienfarben")}${btn("font", "Schriftfarbe")}${drop("Schriftfarben")}
          ${btn("weights", "Linienart")}${btn("dashes", "Strichart")}${btn("arrows", "Pfeilart")}${btn("shadow", "Schatten")}${btn("cube", "3D")}
          ${end("more")}
        </div>
      </div>

      <footer class="status">
        <span class="msg">Bereit</span>
        <i class="box"></i><i class="box far"></i><i class="box"></i>
        <span class="nf">NF</span>
        <i class="box small-box"></i><i class="box small-box"></i>
      </footer>
    </div>`;
  }
}
